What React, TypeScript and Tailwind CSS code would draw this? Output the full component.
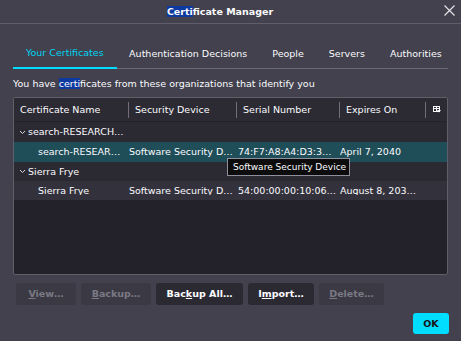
import React from "react";

const font = { fontFamily: '"DejaVu Sans", Verdana, sans-serif' };

function Chevron() {
  return (
    <svg width="7" height="5" viewBox="0 0 7 5" className="shrink-0">
      <path d="M1 1 L3.5 3.5 L6 1" fill="none" stroke="#d6d6dc" strokeWidth="1" />
    </svg>
  );
}

function ColumnPicker() {
  return (
    <svg width="8" height="7" viewBox="0 0 8 7">
      <rect x="0.5" y="0.5" width="6" height="5" fill="none" stroke="#fbfbfe" strokeWidth="1" />
      <path d="M0.5 2.5 L6.5 2.5 M3.5 0.5 L3.5 5.5" stroke="#fbfbfe" strokeWidth="1" />
      <path d="M4 4 L8 4 L6 6.5 Z" fill="#fbfbfe" />
    </svg>
  );
}

const tabs = ["Your Certificates", "Authentication Decisions", "People", "Servers", "Authorities"];

export default function App() {
  return (
    <div
      className="w-[461px] h-[341px] bg-[#42414d] text-[#fbfbfe] text-[9.5px] leading-none flex flex-col relative overflow-hidden"
      style={font}
    >
      {/* Title bar */}
      <div className="h-[24px] shrink-0 border-b border-[#5f5e69] flex items-center justify-center pr-[21px] relative">
        <span className="font-bold">
          <span className="bg-[#0e3aa0]">Certi</span>ficate Manager
        </span>
        <svg className="absolute right-[6px] top-[5px]" width="11" height="11" viewBox="0 0 11 11">
          <path d="M0.5 0.5 L10.5 10.5 M10.5 0.5 L0.5 10.5" stroke="#e8e8ee" strokeWidth="1.1" />
        </svg>
      </div>

      <div className="px-[13px] pt-[15px] flex flex-col flex-1">
        {/* Tabs */}
        <div className="flex border-b border-[#6b6a75] h-[30px]">
          {tabs.map((t, i) => (
            <div
              key={t}
              className={
                i === 0
                  ? "shrink-0 whitespace-nowrap px-[13px] flex items-center border-b-2 border-[#00ddff] text-[#00d4f2] -mb-px"
                  : "shrink-0 whitespace-nowrap px-[12.5px] flex items-center text-[#fbfbfe]"
              }
            >
              {t}
            </div>
          ))}
        </div>

        <p className="mt-[9px] h-[12px] leading-[12px] whitespace-nowrap">
          You have <span className="bg-[#0e3aa0]">certi</span>ficates from these organizations that identify you
        </p>

        {/* Table */}
        <div className="mt-[7px] h-[178px] border border-[#5f5e69] rounded-[2px] bg-[#23222b] flex flex-col overflow-hidden">
          <div className="h-[24px] shrink-0 bg-[#2c2b34] flex items-center border-b border-[#23222b]">
            <div className="w-[114px] px-[6px] flex items-center h-full">Certificate Name</div>
            <div className="w-px h-[16px] bg-[#6f6e79]" />
            <div className="w-[107px] pl-[6px] h-full flex items-center">Security Device</div>
            <div className="w-px h-[16px] bg-[#6f6e79]" />
            <div className="w-[102px] pl-[6px] h-full flex items-center">Serial Number</div>
            <div className="w-px h-[16px] bg-[#6f6e79]" />
            <div className="w-[85px] pl-[6px] h-full flex items-center">Expires On</div>
            <div className="w-px h-[16px] bg-[#6f6e79]" />
            <div className="flex-1 flex items-center justify-center h-full">
              <ColumnPicker />
            </div>
          </div>

          <div className="h-[20px] bg-[#2b2a33] flex items-center pl-[5px] gap-[2px]">
            <Chevron />
            <span>search-RESEARCH…</span>
          </div>
          <div className="h-[20px] bg-[#1f4d58] flex items-center">
            <div className="w-[115px] pl-[24px] whitespace-nowrap overflow-hidden">search-RESEAR…</div>
            <div className="w-[109px] whitespace-nowrap overflow-hidden">Software Security D…</div>
            <div className="w-[102px] whitespace-nowrap overflow-hidden">74:F7:A8:A4:D3:3…</div>
            <div className="flex-1 whitespace-nowrap overflow-hidden">April 7, 2040</div>
          </div>
          <div className="h-[19px] bg-[#2b2a33] flex items-center pl-[5px] gap-[2px]">
            <Chevron />
            <span>Sierra Frye</span>
          </div>
          <div className="h-[19px] bg-[#33323c] flex items-center">
            <div className="w-[115px] pl-[24px] whitespace-nowrap overflow-hidden">Sierra Frye</div>
            <div className="w-[109px] whitespace-nowrap overflow-hidden">Software Security D…</div>
            <div className="w-[102px] whitespace-nowrap overflow-hidden">54:00:00:00:10:06…</div>
            <div className="flex-1 whitespace-nowrap overflow-hidden">August 8, 203…</div>
          </div>
        </div>

        {/* Buttons */}
        <div className="mt-[8px] flex gap-[5px] pl-[3px] font-bold">
          <div className="w-[60px] h-[22px] rounded-[3px] bg-[#3b3a44] text-[#7a7984] flex items-center justify-center">
            <span><u>V</u>iew…</span>
          </div>
          <div className="w-[70px] h-[22px] rounded-[3px] bg-[#3b3a44] text-[#7a7984] flex items-center justify-center">
            <span><u>B</u>ackup…</span>
          </div>
          <div className="w-[87px] h-[22px] rounded-[3px] bg-[#2b2a33] text-[#fbfbfe] flex items-center justify-center">
            <span>Bac<u>k</u>up All…</span>
          </div>
          <div className="w-[66px] h-[22px] rounded-[3px] bg-[#2b2a33] text-[#fbfbfe] flex items-center justify-center">
            <span>I<u>m</u>port…</span>
          </div>
          <div className="w-[65px] h-[22px] rounded-[3px] bg-[#3b3a44] text-[#7a7984] flex items-center justify-center">
            <span><u>D</u>elete…</span>
          </div>
        </div>

        <div className="mt-[8px] flex justify-end">
          <div className="w-[36px] h-[21px] mr-[-1px] rounded-[3px] bg-[#00ddff] text-[#15141a] font-bold flex items-center justify-center">
            OK
          </div>
        </div>
      </div>

      {/* Tooltip */}
      <div className="absolute left-[227px] top-[158px] w-[123px] h-[18px] bg-[#0c0c0d] border border-[#8f8f9d] flex items-center pl-[5px] text-[#fbfbfe] text-[9px]">
        Software Security Device
      </div>
    </div>
  );
}
